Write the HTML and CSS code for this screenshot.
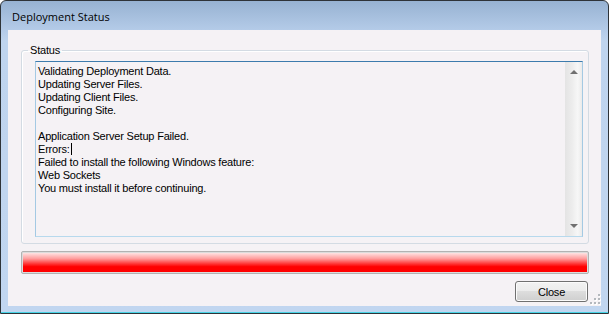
FILE: index.html
```html
<!DOCTYPE html>
<html>
<head>
    <title>Deployment Status</title>
    <link rel="stylesheet" href="styles.css">
</head>
<body>
    <div class="window">
        <div class="title-bar">Deployment Status</div>

        <div class="client">
            <fieldset class="status-group">
                <legend>Status</legend>
                <div class="status-box">
                    <div class="status-text">
                        <div>Validating Deployment Data.</div>
                        <div>Updating Server Files.</div>
                        <div>Updating Client Files.</div>
                        <div>Configuring Site.</div>
                        <div>&nbsp;</div>
                        <div>Application Server Setup Failed.</div>
                        <div>Errors:<span class="caret"></span></div>
                        <div>Failed to install the following Windows feature:</div>
                        <div>Web Sockets</div>
                        <div>You must install it before continuing.</div>
                    </div>
                    <div class="scrollbar">
                        <span class="arrow-up"></span>
                        <span class="arrow-down"></span>
                    </div>
                </div>
            </fieldset>

            <div class="progress">
                <div class="progress-fill"></div>
            </div>

            <div class="button-row">
                <button class="close-button">Close</button>
            </div>

            <!-- size grip -->
            <svg class="grip" width="11" height="11" viewBox="0 0 11 11">
                <rect x="9" y="1" width="2" height="2" fill="#fff"/>
                <rect x="5" y="5" width="2" height="2" fill="#fff"/>
                <rect x="9" y="5" width="2" height="2" fill="#fff"/>
                <rect x="1" y="9" width="2" height="2" fill="#fff"/>
                <rect x="5" y="9" width="2" height="2" fill="#fff"/>
                <rect x="9" y="9" width="2" height="2" fill="#fff"/>
                <rect x="8" y="0" width="2" height="2" fill="#b4b8bd"/>
                <rect x="4" y="4" width="2" height="2" fill="#b4b8bd"/>
                <rect x="8" y="4" width="2" height="2" fill="#b4b8bd"/>
                <rect x="0" y="8" width="2" height="2" fill="#b4b8bd"/>
                <rect x="4" y="8" width="2" height="2" fill="#b4b8bd"/>
                <rect x="8" y="8" width="2" height="2" fill="#b4b8bd"/>
            </svg>
        </div>
    </div>
</body>
</html>
```

FILE: styles.css
```css
body {
    margin: 0;
    background: #ffffff;
}

.window {
    width: 609px;
    height: 314px;
    box-sizing: border-box;
    border: 1px solid #2e3338;
    border-radius: 6px 6px 0 0;
    background:
        linear-gradient(#48d4e6, #48d4e6) left bottom / 100% 1px no-repeat,
        linear-gradient(#97b2d2, #b4cbe8 29px, #bfd4ee 40px, #c1d6f0);
    display: flex;
    flex-direction: column;
}

.title-bar {
    height: 29px;
    box-sizing: border-box;
    padding: 8px 0 0 11px;
    font-family: "Open Sans", sans-serif;
    font-size: 11px;
    line-height: 15px;
    color: #000000;
}

.client {
    position: relative;
    width: 593px;
    height: 276px;
    margin-left: 7px;
    background: #f5f2f5;
    font-family: "Liberation Sans", Arial, sans-serif;
    font-size: 11px;
    line-height: 13px;
    letter-spacing: -0.2px;
    color: #000000;
}

.status-group {
    box-sizing: border-box;
    width: 568px;
    height: 200px;
    margin: 14px 0 0 13px;
    padding: 5px 4px 0 13px;
    border: 1px solid #d3dbe3;
    border-radius: 3px;
    box-shadow: inset 1px 1px #ffffff;
}

.status-group legend {
    margin-left: -7px;
    padding: 0 2px;
    line-height: 12px;
}

.status-box {
    display: flex;
    box-sizing: border-box;
    width: 548px;
    height: 176px;
    border: 1px solid #a4c9e3;
    border-top-color: #3d7bad;
    border-bottom-color: #b7d9ed;
}

.status-text {
    flex: 1;
    padding: 3px 2px;
}

.caret {
    display: inline-block;
    width: 1px;
    height: 12px;
    margin-left: 1px;
    vertical-align: -2px;
    background: #000000;
}

.scrollbar {
    width: 17px;
    display: flex;
    flex-direction: column;
    justify-content: space-between;
    align-items: center;
    padding: 8px 0 8px;
    box-sizing: border-box;
    background: linear-gradient(to right, #e4e4e4, #ececec 40%, #f7f7f7 75%, #eaeaea);
}

.arrow-up {
    width: 0;
    height: 0;
    border-left: 4px solid transparent;
    border-right: 4px solid transparent;
    border-bottom: 4px solid #707070;
}

.arrow-down {
    width: 0;
    height: 0;
    border-left: 4px solid transparent;
    border-right: 4px solid transparent;
    border-top: 4px solid #707070;
}

.progress {
    box-sizing: border-box;
    width: 568px;
    height: 23px;
    margin: 7px 0 0 13px;
    padding: 1px;
    border: 1px solid #b2b2b2;
    border-radius: 2px;
    background: #dcdcdc;
}

.progress-fill {
    height: 100%;
    background: linear-gradient(#ffe2e2, #ff9c9c 30%, #ff2a2a 60%, #ff0000 72%, #ff0000);
}

.button-row {
    display: flex;
    justify-content: flex-end;
    padding-right: 13px;
    margin-top: 7px;
}

.close-button {
    width: 73px;
    height: 21px;
    padding: 0;
    border: 1px solid #707070;
    border-radius: 3px;
    box-shadow: inset 0 0 0 1px #fbfbfb;
    background: linear-gradient(#f2f2f2, #ebebeb 50%, #dddddd 50%, #cfcfcf);
    font-family: inherit;
    font-size: 11px;
    letter-spacing: inherit;
    color: #000000;
}

.grip {
    position: absolute;
    right: 0;
    bottom: 1px;
}
```
